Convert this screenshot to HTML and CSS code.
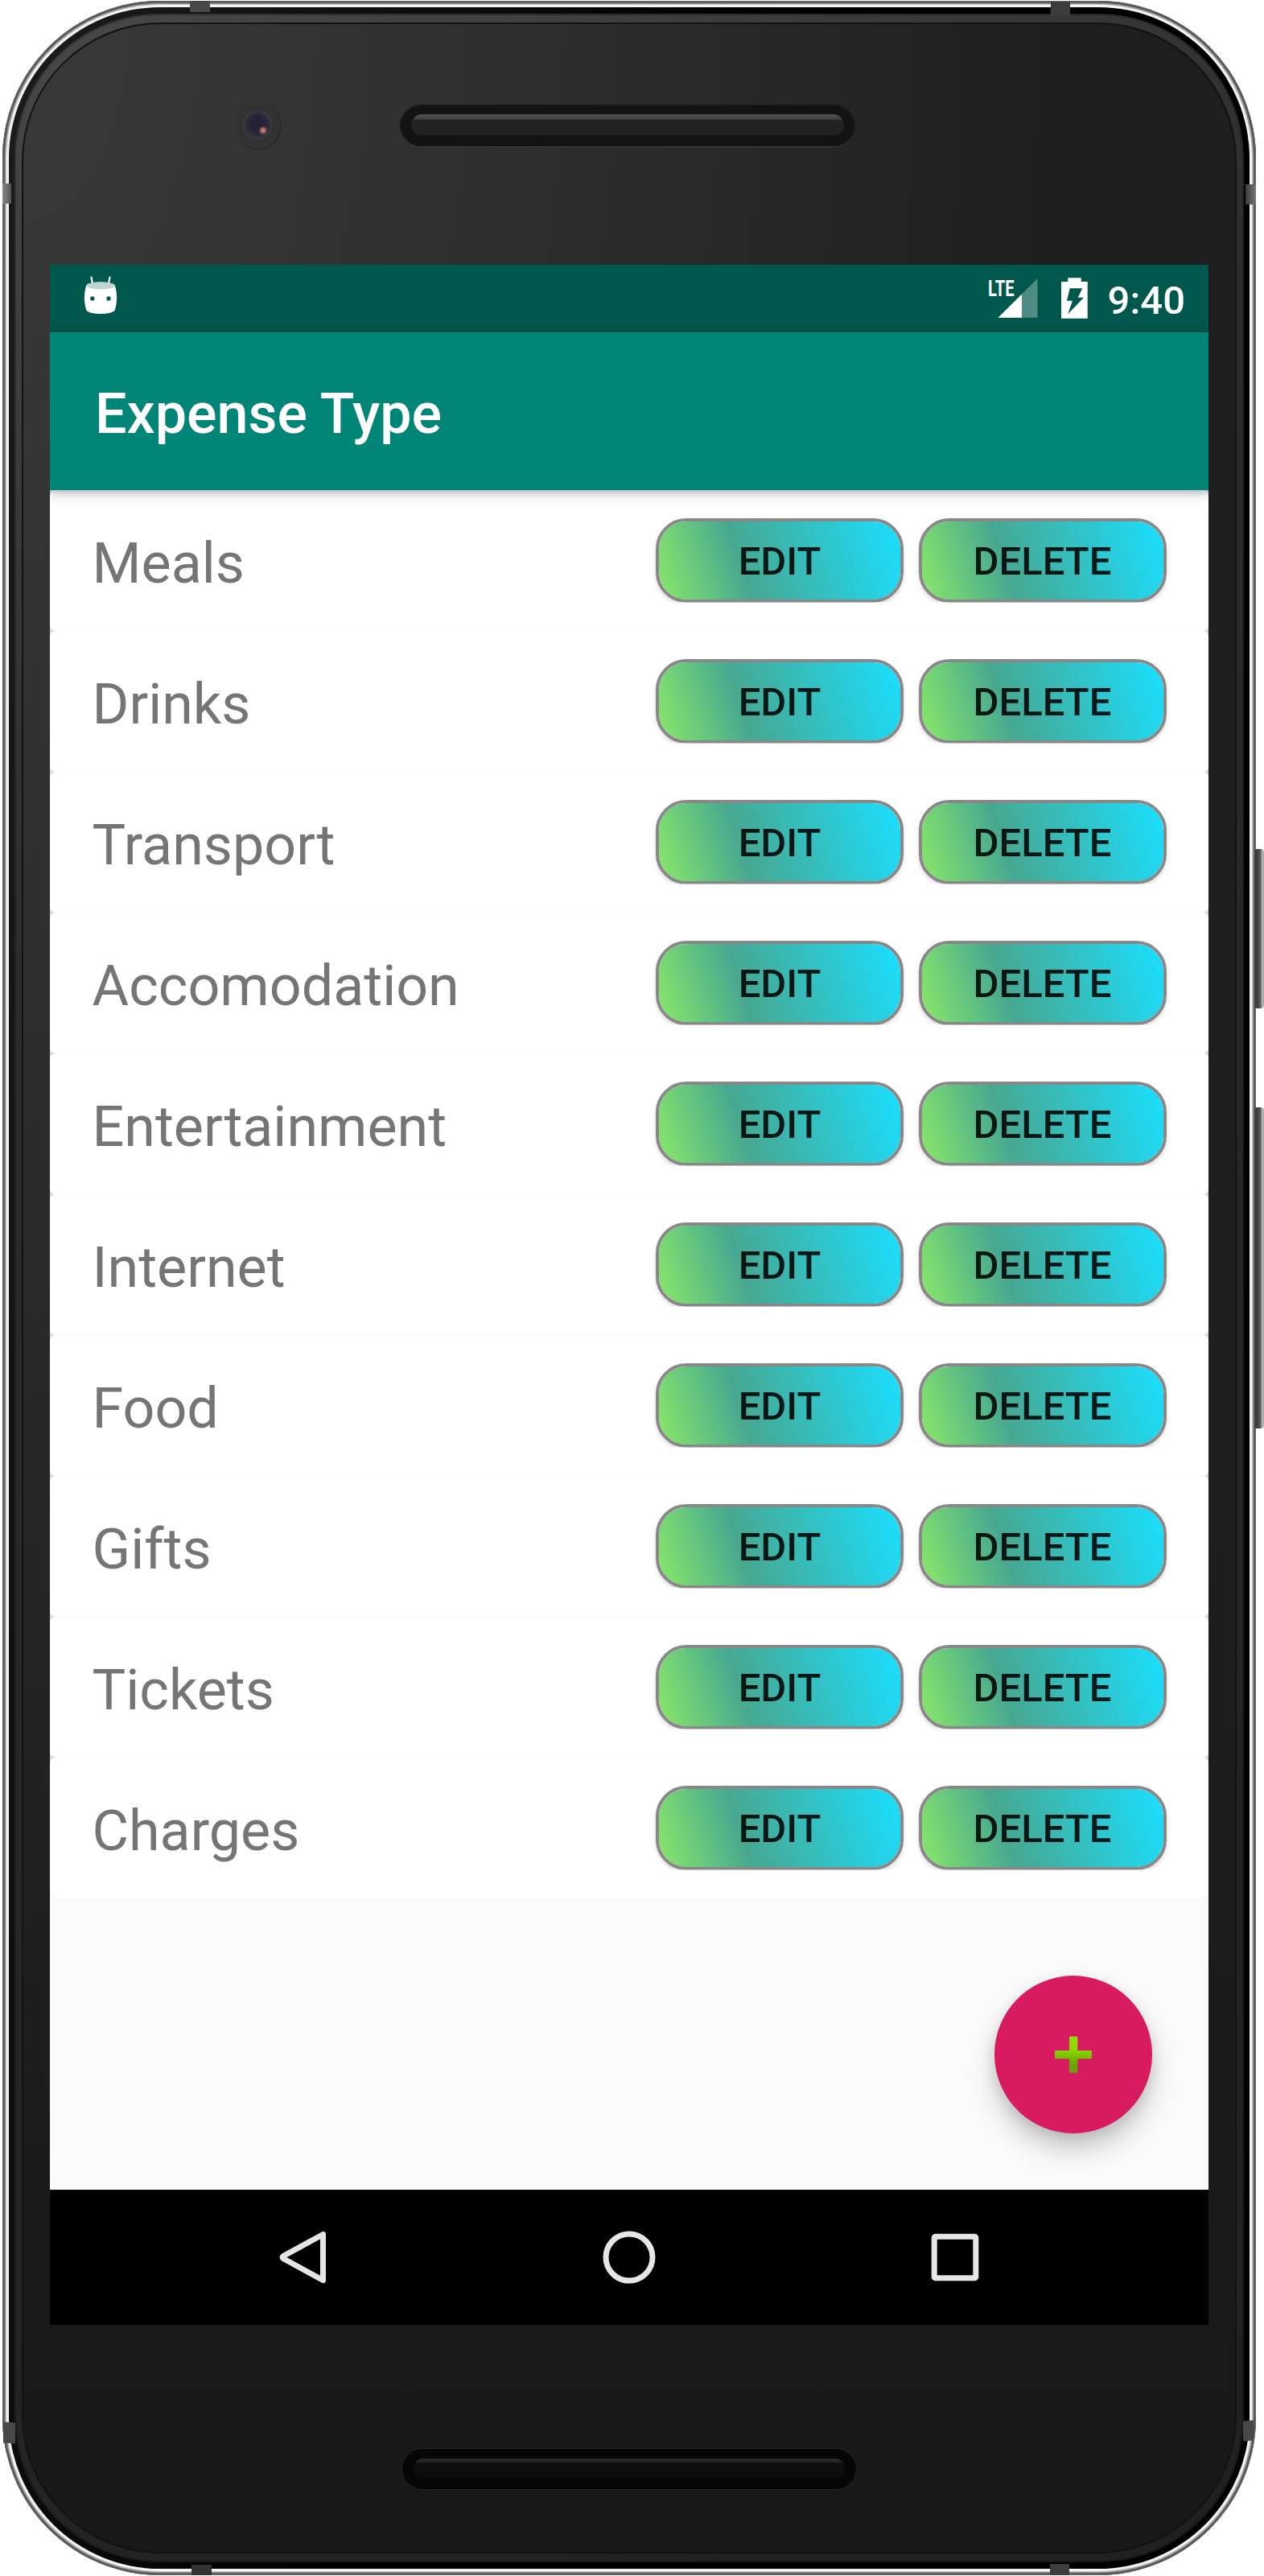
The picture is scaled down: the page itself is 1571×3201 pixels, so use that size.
FILE: index.html
```html
<!DOCTYPE html>
<html lang="en">
<head>
<meta charset="utf-8">
<title>Expense Type</title>
<link rel="stylesheet" href="styles.css">
</head>
<body>
<div class="phone">
  <div class="rim"><div class="bevel"><div class="groove"><div class="face">
    <div class="forehead">
      <span class="camera"></span>
      <span class="speaker"></span>
    </div>
    <div class="screen">
      <div class="status">
        <svg class="robot" width="42" height="46" viewBox="0 0 42 46">
          <path d="M9.500 2.500 11.500 13M32.500 2.500 30.500 13" stroke="#fff" stroke-width="2.200" stroke-linecap="round"/>
          <path d="M3.500 12Q8 8.500 21 8.500T38.500 12C42 22 42 34 38.500 44Q34 48 21 48T3.500 44C0 34 0 22 3.500 12Z" fill="#fff"/>
          <ellipse cx="21" cy="13" rx="17.500" ry="4.500" fill="#bfd5d1"/>
          <circle cx="10.800" cy="29" r="2.700" fill="#00574b"/><circle cx="31" cy="29" r="2.700" fill="#00574b"/>
        </svg>
        <svg class="signal" width="62" height="52" viewBox="-1 0 62 52">
          <path d="M60.500 2V50.700H11.500Z" fill="#fff" fill-opacity=".31"/>
          <path d="M41 21.500V50.700H11.500Z" fill="#fff"/>
          <text x="-1" y="23.600" font-size="28.500" textLength="32.500" lengthAdjust="spacingAndGlyphs" class="lte">LTE</text>
        </svg>
        <svg class="battery" width="33" height="52" viewBox="0 0 33 52">
          <path fill-rule="evenodd" fill="#fff" d="M8.300 1.300H24.700V6H32.700V51.700H0V6H8.300ZM10.700 14.300 7 29.700H14L8.300 46.300 28 25.700H20.700L26.300 14.300Z"/>
        </svg>
        <span class="clock">9:40</span>
      </div>
      <header class="appbar"><h1>Expense Type</h1></header>
      <main class="content">
        <ul class="list">
          <li class="card"><span class="name">Meals</span><button class="btn">EDIT</button><button class="btn">DELETE</button></li>
          <li class="card"><span class="name">Drinks</span><button class="btn">EDIT</button><button class="btn">DELETE</button></li>
          <li class="card"><span class="name">Transport</span><button class="btn">EDIT</button><button class="btn">DELETE</button></li>
          <li class="card"><span class="name">Accomodation</span><button class="btn">EDIT</button><button class="btn">DELETE</button></li>
          <li class="card"><span class="name">Entertainment</span><button class="btn">EDIT</button><button class="btn">DELETE</button></li>
          <li class="card"><span class="name">Internet</span><button class="btn">EDIT</button><button class="btn">DELETE</button></li>
          <li class="card"><span class="name">Food</span><button class="btn">EDIT</button><button class="btn">DELETE</button></li>
          <li class="card"><span class="name">Gifts</span><button class="btn">EDIT</button><button class="btn">DELETE</button></li>
          <li class="card"><span class="name">Tickets</span><button class="btn">EDIT</button><button class="btn">DELETE</button></li>
          <li class="card"><span class="name">Charges</span><button class="btn">EDIT</button><button class="btn">DELETE</button></li>
        </ul>
        <button class="fab" aria-label="Add">
          <svg width="48" height="48" viewBox="0 0 48 48">
            <defs><linearGradient id="leaf" x1="0" y1="0" x2="0" y2="1"><stop offset="0" stop-color="#95e000"/><stop offset=".4" stop-color="#8bd400"/><stop offset=".8" stop-color="#62a400"/><stop offset="1" stop-color="#6aa50c"/></linearGradient></defs>
            <path d="M19 2.500Q19 1.500 20 1.500H28.300Q29.300 1.500 29.300 2.500V19H46Q47 19 47 20V28.300Q47 29.300 46 29.300H29.300V45.500Q29.300 46.500 28.300 46.500H20Q19 46.500 19 45.500V29.300H2Q1 29.300 1 28.300V20Q1 19 2 19H19Z" fill="url(#leaf)"/>
          </svg>
        </button>
      </main>
      <nav class="nav">
        <svg width="66" height="66" viewBox="0 0 66 66"><path d="M57.500 4.500V61.500L8 34.500Q6 33 8 31.500Z"/></svg>
        <svg width="66" height="66" viewBox="0 0 66 66"><circle cx="33" cy="33" r="29"/></svg>
        <svg width="66" height="66" viewBox="0 0 66 66"><rect x="7.200" y="7.200" width="51.600" height="51.600" rx="1.500"/></svg>
      </nav>
    </div>
    <div class="chin"><span class="speaker lower"></span></div>
  </div></div></div></div>
  <i class="band tl"></i><i class="band tr"></i><i class="band lt"></i><i class="band rt"></i>
  <i class="band lb"></i><i class="band rb"></i><i class="band bl"></i><i class="band br"></i>
  <i class="key power"></i><i class="key volume"></i>
</div>
</body>
</html>
```
FILE: styles.css
```css
* { box-sizing: border-box; }
body { margin: 0; background: #fff; font-family: Roboto, "Liberation Sans", sans-serif; }
button { font: inherit; border: 0; padding: 0; margin: 0; }
svg { display: block; }

.phone {
  position: relative;
  width: 1558px; height: 3199px;
  margin: 1px 0 1px 3px;
  padding: 8px;
  border-radius: 196px;
  background: #f4f4f4;
  box-shadow: inset 0 0 0 1px #6a6a6a, inset 0 0 0 2.500px #505050, inset 0 0 0 4px #8c8c8c, inset 0 0 0 5px #c4c4c4;
}
.rim { height: 100%; padding: 8px 7px; border-radius: 188px; background: linear-gradient(100deg, #1c1c1c, #000 45%); }
.bevel { height: 100%; padding: 11px 9px; border-radius: 180px; background: linear-gradient(150deg, #484848, #2c2c2c 30%, #262626 60%, #202020); box-shadow: inset 0 0 0 2px rgba(0,0,0,.25); }
.groove { height: 100%; padding: 2px; border-radius: 172px; background: #121212; }
.face {
  height: 100%; border-radius: 170px;
  display: flex; flex-direction: column; align-items: center;
  background: radial-gradient(1450px 2700px at 0 0, #393939, #343434 22%, #292929 60%, #1e1e1e 90%, rgba(30,30,30,0)), linear-gradient(#1e1e1e 60%, #181818);
}
.forehead { position: relative; flex: none; width: 1440px; height: 299px; display: flex; justify-content: center; padding-top: 101px; }
.speaker {
  width: 564px; height: 51px; border-radius: 26px; border: solid #131313; border-width: 11px 13px 14px;
  background: linear-gradient(#505050, #464646 5px, #232323 8px, #222);
  box-shadow: 0 1px 0 #484848, 0 0 1px 1px #1a1a1a;
  margin-left: -4px;
}
.speaker.lower {
  height: 50px; margin-left: 0; border-color: #060606; border-width: 12px 14px 13px;
  background: linear-gradient(#2c2c2c, #242424 4px, #0e0e0e 6px, #0c0c0c);
  box-shadow: 0 0 0 1px #242424;
}
.camera {
  position: absolute; left: 229px; top: 95px; width: 57px; height: 60px; border-radius: 50%;
  background: radial-gradient(circle at 36px 37px, #c47a70 0 2px, rgba(150,90,90,.5) 4px, transparent 6px), radial-gradient(circle at 29px 30px, #262235 0 8px, #2e2a3a 14px, #3b3a3d 17px, #313131 19px, #333 27px);
  box-shadow: 1px 1px 1px #222;
}
.screen { flex: none; width: 1440px; height: 2560px; display: flex; flex-direction: column; background: #fafafa; overflow: hidden; }
.status { flex: none; height: 84px; background: #00574b; display: flex; align-items: flex-start; padding: 15px 29px 0 42px; color: #fff; }
.robot { margin: -2px auto 0 0; overflow: visible; }
.signal { margin-right: 29px; overflow: visible; }
.lte { fill: #fff; font-weight: 700; }
.battery { margin-right: 25px; }
.clock { font-size: 49px; line-height: 60px; font-weight: 500; }
.appbar { flex: none; height: 196px; padding: 5px 0 0 56px; display: flex; align-items: center; background: #008577; color: #fff; position: relative; z-index: 1; box-shadow: 0 2px 8px rgba(0,0,0,.2), 0 6px 16px rgba(0,0,0,.16); }
h1 { margin: 0; font-size: 70px; font-weight: 500; line-height: 82px; }
.content { position: relative; flex: 1; }
.list { list-style: none; margin: 0; padding: 0; background: #d9d9d9; border-radius: 0 0 7px 7px; }
.card { height: 175px; display: flex; align-items: center; padding: 0 52.500px; background: #fff; border-radius: 7px; border-bottom: 1px solid #fafafa; }
.name { flex: 1; font-size: 70px; line-height: 82px; color: #757575; padding-top: 7px; }
.btn {
  width: 308px; height: 105px; margin-left: 18.500px; padding-top: 3px; border: 4px solid #888; border-radius: 38px;
  background: linear-gradient(72.300deg, #89e868, #47a891 35%, #1adfff) padding-box;
  color: rgba(0,0,0,.87); font-size: 49px; font-weight: 500; line-height: 57px;
  box-shadow: 0 3px 5px rgba(0,0,0,.15);
  clip-path: inset(0 -8px);
}
.fab {
  position: absolute; right: 70px; bottom: 70px; width: 196px; height: 196px; border-radius: 50%;
  background: #d81b60; display: flex; align-items: center; justify-content: center;
  box-shadow: 0 20px 32px rgba(0,0,0,.2), 0 5px 16px rgba(0,0,0,.1);
}
.nav { flex: none; height: 168px; background: #000; display: flex; align-items: center; justify-content: center; gap: 339px; }
.nav svg { fill: none; stroke: #e6e6e6; stroke-width: 7; stroke-linejoin: round; }
.chin { flex: 1; display: flex; justify-content: center; align-items: flex-start; padding-top: 154px; }

.band { position: absolute; background: #484848; }
.tl { left: 233px; top: 0; width: 25px; height: 14px; }
.tr { left: 1303px; top: 1px; width: 24px; height: 18px; background: #3c3c3c; }
.lt { left: 0; top: 227px; width: 11px; height: 25px; background: linear-gradient(90deg, #888, #555); }
.rt { right: 0; top: 228px; width: 13px; height: 25px; background: linear-gradient(90deg, #3a3a3a, #777); }
.lb { left: 1px; top: 3009px; width: 15px; height: 26px; transform: skewY(4deg); }
.rb { right: 3px; top: 3007px; width: 13px; height: 25px; transform: skewY(-4deg); }
.bl { left: 235px; bottom: 0; width: 25px; height: 13px; background: #333; }
.br { left: 1302px; bottom: 0; width: 24px; height: 14px; background: #3c3c3c; }
.key { position: absolute; left: 1557px; width: 11px; border-radius: 2px 4px 4px 2px; background: linear-gradient(90deg, #333, #4c4c4c 5px, #666 7px, #c4c4c4 9px, #999); }
.power { top: 1054px; height: 198px; }
.volume { top: 1375px; height: 399px; }
```
